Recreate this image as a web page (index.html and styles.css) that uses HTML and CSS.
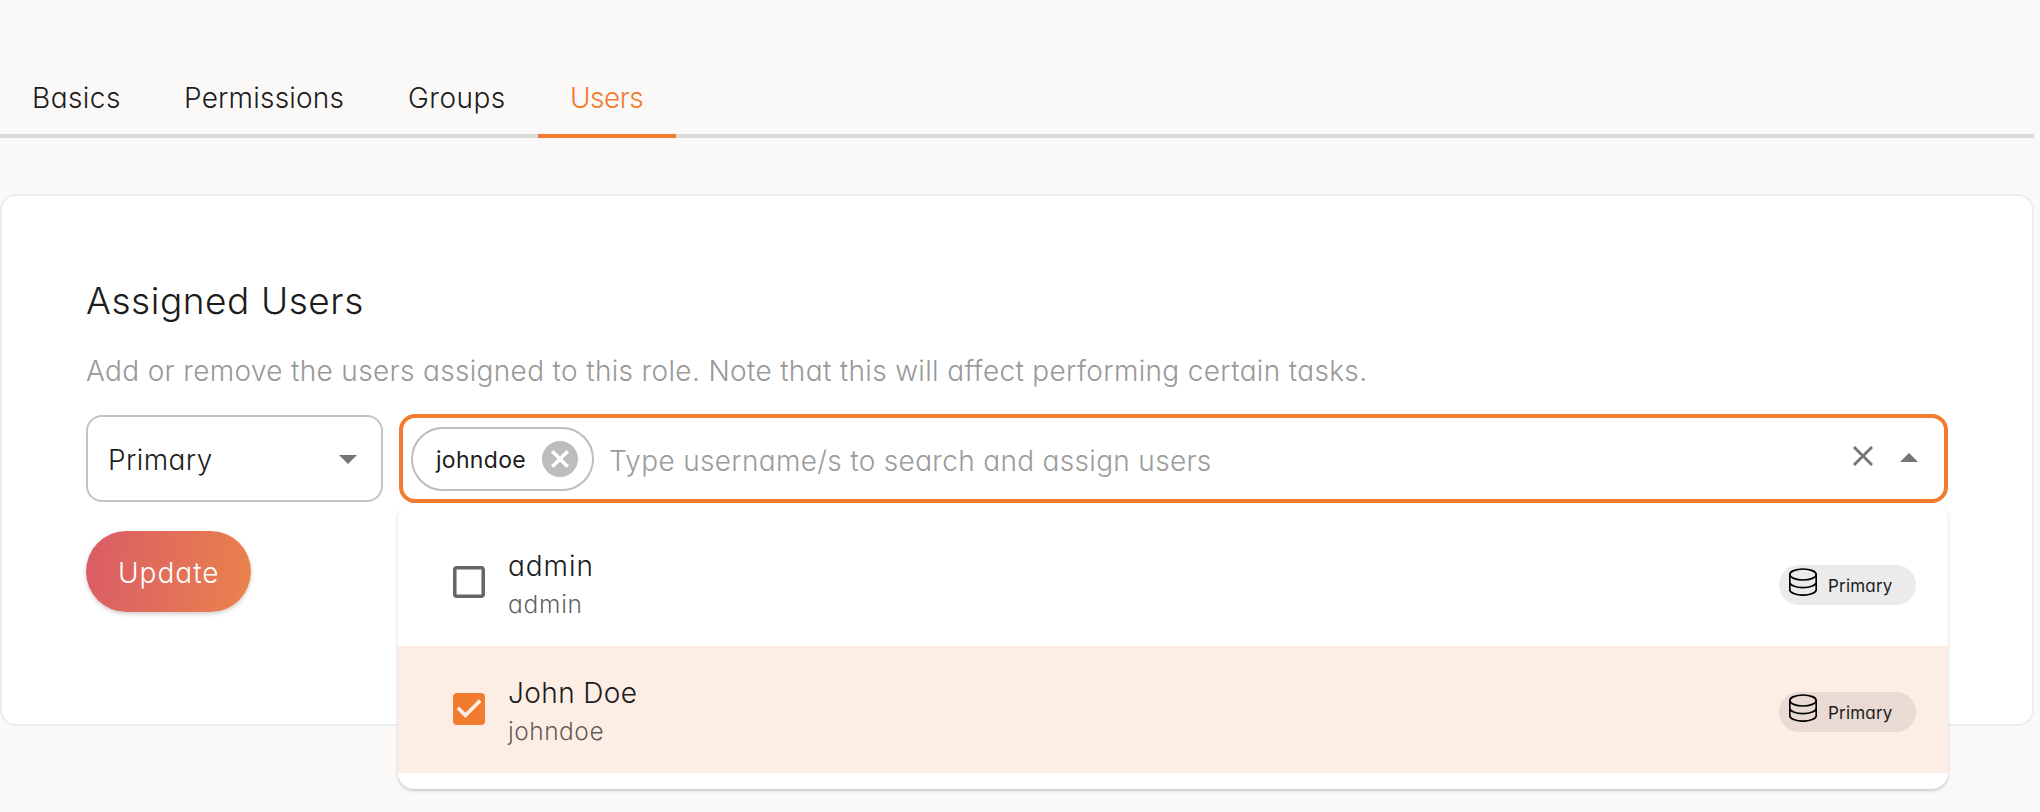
FILE: index.html
```html
<!DOCTYPE html>
<html lang="en">
<head>
<meta charset="utf-8">
<title>Role users</title>
<link rel="stylesheet" href="styles.css">
</head>
<body>
<nav class="tabs">
  <a class="tab t-basics"><span>Basics</span></a>
  <a class="tab t-permissions"><span>Permissions</span></a>
  <a class="tab t-groups"><span>Groups</span></a>
  <a class="tab tab-active"><span>Users</span></a>
</nav>
<main class="card">
  <h1 class="title"><span>Assigned Users</span></h1>
  <p class="hint"><span>Add or remove the users assigned to this role. Note that this will affect performing certain tasks.</span></p>
  <div class="fields">
    <div class="select"><span class="select-text">Primary</span>
      <svg class="caret" viewBox="0 0 18 9"><path d="M0 0h18l-9 9z"/></svg>
    </div>
    <div class="combo">
      <div class="tag"><span class="tag-text">johndoe</span>
        <svg class="tag-x" viewBox="2 2 20 20"><path d="M12 2C6.47 2 2 6.47 2 12s4.47 10 10 10 10-4.47 10-10S17.53 2 12 2zm5 13.59L15.59 17 12 13.41 8.41 17 7 15.59 10.59 12 7 8.41 8.41 7 12 10.59 15.59 7 17 8.41 13.41 12 17 15.59z"/></svg>
      </div>
      <span class="placeholder">Type username/s to search and assign users</span>
      <svg class="clear" viewBox="5 5 14 14"><path d="M19 6.41L17.59 5 12 10.59 6.41 5 5 6.41 10.59 12 5 17.59 6.41 19 12 13.41 17.59 19 19 17.59 13.41 12z"/></svg>
      <svg class="caret caret-up" viewBox="0 0 18 9"><path d="M0 9h18l-9-9z"/></svg>
      <div class="menu">
        <div class="option">
          <svg class="check" viewBox="3 3 18 18"><path d="M19 5v14H5V5h14m0-2H5c-1.1 0-2 .9-2 2v14c0 1.1.9 2 2 2h14c1.1 0 2-.9 2-2V5c0-1.100-.9-2-2-2z"/></svg>
          <div class="names"><span class="name">admin</span><span class="login">admin</span></div>
          <div class="badge">
            <svg class="db" viewBox="0 0 28 28"><ellipse cx="14" cy="6.500" rx="13.200" ry="5.500"/><path d="M.8 6.500v15.200c0 3 5.900 5.500 13.200 5.500s13.200-2.500 13.200-5.500V6.500M.8 14.200c0 3 5.900 5.400 13.200 5.400s13.200-2.400 13.200-5.400"/></svg>
            <span class="badge-text">Primary</span>
          </div>
        </div>
        <div class="option option-on">
          <svg class="check check-on" viewBox="3 3 18 18"><path d="M19 3H5c-1.110 0-2 .9-2 2v14c0 1.100.89 2 2 2h14c1.110 0 2-.9 2-2V5c0-1.100-.89-2-2-2zm-9 14l-5-5 1.410-1.410L10 14.170l7.590-7.590L19 8l-9 9z"/></svg>
          <div class="names"><span class="name name-2">John Doe</span><span class="login login-2">johndoe</span></div>
          <div class="badge">
            <svg class="db db-on" viewBox="0 0 28 28"><ellipse cx="14" cy="6.500" rx="13.200" ry="5.500"/><path d="M.8 6.500v15.200c0 3 5.900 5.500 13.200 5.500s13.200-2.500 13.200-5.500V6.500M.8 14.200c0 3 5.900 5.400 13.200 5.400s13.200-2.400 13.200-5.400"/></svg>
            <span class="badge-text">Primary</span>
          </div>
        </div>
      </div>
    </div>
  </div>
  <button class="update"><span>Update</span></button>
</main>
</body>
</html>
```
FILE: styles.css
```css
* { box-sizing: border-box; }
body {
  margin: 0;
  height: 812px;
  overflow: hidden;
  background: #faf9f7;
  color: #1c1c1c;
  font-family: Inter, "Open Sans", sans-serif;
  font-feature-settings: "cv11";
  font-weight: 300;
  font-size: 28px;
}
svg { display: block; flex: none; }
span { white-space: nowrap; }
.tabs {
  display: flex;
  width: 2034px;
  height: 138px;
  padding-top: 58px;
  border-bottom: 4px solid #d9d9d9;
}
.tab {
  height: 80px;
  padding: 20px 32px 0;
  line-height: 40px;
  border-bottom: 4px solid transparent;
}
.t-basics { width: 152px; letter-spacing: .45px; }
.t-permissions { width: 224px; letter-spacing: .2px; }
.t-groups { width: 162px; letter-spacing: .5px; }
.tab-active { width: 138px; color: #f17c30; border-color: #f17c30; letter-spacing: -.5px; }
.card {
  width: 2034px;
  height: 532px;
  margin-top: 56px;
  padding: 83px 84px 0;
  background: #fff;
  border: 2px solid #ededed;
  border-radius: 16px;
}
.title { margin: 0; font-size: 37px; font-weight: 300; line-height: 44px; letter-spacing: .55px; }
.hint { margin: 28px 0 0; line-height: 40px; color: #999; letter-spacing: .34px; }
.fields { display: flex; align-items: center; gap: 16px; margin-top: 23px; height: 89px; }
.select {
  display: flex;
  align-items: center;
  justify-content: space-between;
  width: 297px;
  height: 87px;
  padding: 0 24px 0 20px;
  border: 2px solid #c4c4c4;
  border-radius: 16px;
}
.select-text { padding-top: 3px; letter-spacing: .4px; }
.caret { width: 18px; height: 9px; margin-top: 1px; fill: #757575; }
.combo {
  position: relative;
  display: flex;
  align-items: center;
  width: 1549px;
  height: 89px;
  padding: 0 26px 0 8px;
  border: 4px solid #f17c30;
  border-radius: 16px;
}
.tag {
  display: flex;
  align-items: center;
  justify-content: space-between;
  width: 183px;
  height: 64px;
  padding: 0 14px 0 23px;
  border: 2px solid #bdbdbd;
  border-radius: 32px;
}
.tag-text { padding-top: 3px; font-size: 23px; font-weight: 400; letter-spacing: .3px; }
.tag-x { width: 36px; height: 36px; fill: #bdbdbd; }
.placeholder { padding-top: 4px; margin-left: 15px; color: #9c9c9c; letter-spacing: .32px; }
.clear { width: 20px; height: 20px; margin: 0 27px 5px auto; fill: #757575; }
.caret-up { margin-bottom: 4px; }
.menu {
  position: absolute;
  left: -5px;
  top: 85px;
  width: 1550px;
  height: 286px;
  padding: 16px 0;
  background: #fff;
  border-radius: 16px;
  box-shadow: 0 2px 3px rgba(0, 0, 0, .15), 0 1px 6px rgba(0, 0, 0, .05);
}
.option { display: flex; align-items: center; height: 127px; padding: 0 32px 0 55px; }
.option-on { background: #fdeee5; }
.check { width: 32px; height: 32px; margin-bottom: 2px; fill: #666; }
.check-on { fill: #f17c30; }
.names { display: flex; flex-direction: column; margin-left: 23px; padding-top: 2px; }
.name { line-height: 40px; letter-spacing: .95px; }
.name-2 { letter-spacing: .4px; }
.login { font-size: 24.5px; line-height: 36px; color: rgba(0, 0, 0, .64); letter-spacing: .75px; }
.login-2 { letter-spacing: .5px; }
.badge {
  display: flex;
  align-items: center;
  width: 137px;
  height: 40px;
  margin: 5px 0 0 auto;
  padding-left: 10px;
  background: rgba(0, 0, 0, .08);
  border-radius: 20px;
}
.badge-text { margin-left: 11px; padding-top: 1px; font-size: 17px; font-weight: 400; letter-spacing: .2px; }
.db { width: 28px; height: 28px; margin-bottom: 6px; fill: none; stroke: #000; stroke-width: 1.700; }
.db-on { margin-bottom: 8px; }
.update {
  display: block;
  width: 165px;
  height: 81px;
  margin-top: 28px;
  padding: 3px 0 0 32px;
  text-align: left;
  border: 0;
  border-radius: 41px;
  background: linear-gradient(100deg, #da5b67, #ea834c);
  box-shadow: 0 2px 4px rgba(0, 0, 0, .2);
  color: #fff;
  font: inherit;
  font-feature-settings: "cv11";
  letter-spacing: 1px;
}
```
